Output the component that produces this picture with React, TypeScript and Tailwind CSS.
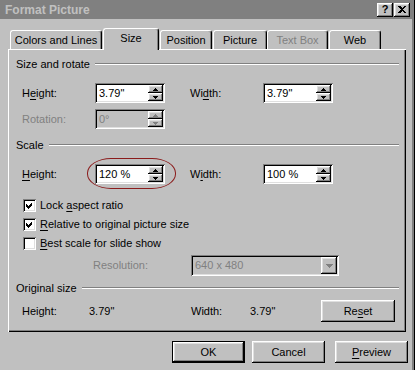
import React from 'react';

const raised = 'shadow-[inset_-1px_-1px_#000,inset_1px_1px_#fff,inset_-2px_-2px_#808080,inset_2px_2px_#dfdfdf]';
const sunken = 'shadow-[inset_1px_1px_#808080,inset_-1px_-1px_#fff,inset_2px_2px_#000,inset_-2px_-2px_#dfdfdf]';

const U = ({ children }: { children: React.ReactNode }) => <span className="underline underline-offset-[2px]">{children}</span>;

const Arrow = ({ up, disabled }: { up?: boolean; disabled?: boolean }) => (
  <svg width="5" height="3" viewBox="0 0 5 3" shapeRendering="crispEdges">
    <polygon points={up ? '0,3 5,3 2.5,0' : '0,0 5,0 2.5,3'} fill={disabled ? '#808080' : '#000'} />
  </svg>
);

const Spin = ({ value, disabled }: { value: string; disabled?: boolean }) => (
  <div className={`w-[70px] h-[20px] p-[2px] flex ${sunken} ${disabled ? 'bg-[#c0c0c0]' : 'bg-white'}`}>
    <div className={`flex-1 flex items-center pl-[2px] ${disabled ? 'text-[#808080]' : 'text-black'}`}>{value}</div>
    <div className="w-[15px] flex flex-col">
      <div className={`flex-1 flex items-center justify-center bg-[#c0c0c0] ${raised}`}><Arrow up disabled={disabled} /></div>
      <div className={`flex-1 flex items-center justify-center bg-[#c0c0c0] ${raised}`}><Arrow disabled={disabled} /></div>
    </div>
  </div>
);

const Header = ({ title }: { title: string }) => (
  <div className="h-[14px] flex items-center gap-[5px] pl-[8px] pr-[7px]">
    <span>{title}</span>
    <div className="flex-1 border-t border-b border-t-[#808080] border-b-white" />
  </div>
);

const Check = ({ checked, children }: { checked?: boolean; children: React.ReactNode }) => (
  <div className="h-[14px] flex items-center pl-[15px] gap-[4px]">
    <div className={`w-[13px] h-[13px] bg-white p-[2px] ${sunken}`}>
      {checked && (
        <svg width="9" height="9" viewBox="0 0 9 9" shapeRendering="crispEdges">
          <polygon points="1,3 3,5 7,1 7,4 3,8 1,6" fill="#000" />
        </svg>
      )}
    </div>
    <span>{children}</span>
  </div>
);

const Tab = ({ label, w, active, disabled, ml }: { label: string; w: string; active?: boolean; disabled?: boolean; ml: string }) => (
  <div
    className={`${w} ${ml} flex items-center justify-center bg-[#c0c0c0] border-l border-t border-white border-r border-r-black rounded-t-[3px] shadow-[inset_-1px_0_#808080] ${
      active ? 'h-[22px] -mb-[1px] z-10 pb-[3px]' : 'h-[19px]'
    } ${disabled ? 'text-[#808080]' : 'text-black'}`}
  >
    {label}
  </div>
);

const Button = ({ children, w, def }: { children: React.ReactNode; w: string; def?: boolean }) => (
  <div className={`${w} h-[22px] flex items-center justify-center bg-[#c0c0c0] ${def ? 'border border-black' : ''}`}>
    <div className={`w-full h-full flex items-center justify-center ${raised}`}>{children}</div>
  </div>
);

export default function App() {
  return (
    <div className="w-[415px] h-[370px] bg-[#c0c0c0] flex font-['Liberation_Sans',Arial,sans-serif] text-[11px] text-black overflow-hidden">
      <div className="w-[412px] h-full flex flex-col">
        {/* title bar */}
        <div className="h-[19px] bg-[#808080] flex items-center pl-[5px] pr-[2px]">
          <span className="flex-1 font-bold text-[12px] text-[#c0c0c0]">Format Picture</span>
          <div className={`w-[16px] h-[14px] bg-[#c0c0c0] flex items-center justify-center font-bold text-[11px] ${raised}`}>?</div>
          <div className={`w-[16px] h-[14px] ml-[1px] bg-[#c0c0c0] flex items-center justify-center ${raised}`}>
            <svg width="8" height="7" viewBox="0 0 8 7" shapeRendering="crispEdges">
              <path d="M0 0h2l2 2 2-2h2L5 3.5 8 7H6L4 5 2 7H0l3-3.5z" fill="#000" />
            </svg>
          </div>
        </div>

        {/* tabs */}
        <div className="h-[21px] mt-[9px] flex items-end pl-[10px] relative">
          <Tab label="Colors and Lines" w="w-[92px]" ml="ml-0" />
          <Tab label="Size" w="w-[56px]" ml="ml-[1px]" active />
          <Tab label="Position" w="w-[52px]" ml="ml-[1px]" />
          <Tab label="Picture" w="w-[54px]" ml="ml-[1px]" />
          <Tab label="Text Box" w="w-[61px]" ml="ml-0" disabled />
          <Tab label="Web" w="w-[52px]" ml="ml-[1px]" />
        </div>

        {/* panel */}
        <div className="ml-[8px] w-[398px] h-[283px] relative shadow-[inset_1px_1px_#fff,inset_-1px_-1px_#000,inset_-2px_-2px_#808080] flex flex-col">
          <div className="pt-[8px]">
            <Header title="Size and rotate" />
          </div>

          <div className="mt-[12px] h-[20px] flex items-center">
            <span className="w-[87px] pl-[14px]">H<U>e</U>ight:</span>
            <Spin value={'3.79"'} />
            <span className="w-[98px] pl-[25px]">Wi<U>d</U>th:</span>
            <Spin value={'3.79"'} />
          </div>

          <div className="mt-[6px] h-[20px] flex items-center">
            <span className="w-[87px] pl-[14px] text-[#808080]">Rotation:</span>
            <Spin value="0°" disabled />
          </div>

          <div className="mt-[9px]">
            <Header title="Scale" />
          </div>

          <div className="mt-[12px] h-[20px] flex items-center">
            <span className="w-[87px] pl-[14px]"><U>H</U>eight:</span>
            <Spin value="120 %" />
            <span className="w-[98px] pl-[25px]">W<U>i</U>dth:</span>
            <Spin value="100 %" />
          </div>

          <div className="mt-[14px]">
            <Check checked>Lock <U>a</U>spect ratio</Check>
          </div>
          <div className="mt-[5px]">
            <Check checked><U>R</U>elative to original picture size</Check>
          </div>
          <div className="mt-[5px]">
            <Check><U>B</U>est scale for slide show</Check>
          </div>

          <div className="mt-[5px] h-[21px] flex items-center">
            <span className="w-[140px] pr-[0px] text-right text-[#808080]">Resolution:</span>
            <div className={`ml-[43px] w-[148px] h-[21px] p-[2px] flex bg-[#c0c0c0] ${sunken}`}>
              <div className="flex-1 flex items-center pl-[2px] text-[#808080]">640 x 480</div>
              <div className={`w-[16px] flex items-center justify-center ${raised}`}>
                <svg width="7" height="4" viewBox="0 0 7 4" shapeRendering="crispEdges">
                  <polygon points="0,0 7,0 3.5,4" fill="#808080" />
                </svg>
              </div>
            </div>
          </div>

          <div className="mt-[5px]">
            <Header title="Original size" />
          </div>

          <div className="mt-[5px] h-[22px] flex items-center">
            <span className="w-[81px] pl-[14px]">Height:</span>
            <span className="w-[102px]">3.79"</span>
            <span className="w-[59px]">Width:</span>
            <span className="w-[71px]">3.79"</span>
            <Button w="w-[74px]">Re<U>s</U>et</Button>
          </div>

          {/* hand-drawn highlight around scale height */}
          <div className="absolute left-[79px] top-[109px] w-[89px] h-[31px] border-[1.5px] border-[#8b1c1c] rounded-[24px/15px]" />
        </div>

        {/* dialog buttons */}
        <div className="mt-[9px] flex pl-[172px]">
          <Button w="w-[73px]" def>OK</Button>
          <div className="ml-[7px]"><Button w="w-[73px]">Cancel</Button></div>
          <div className="ml-[10px]"><Button w="w-[73px]"><U>P</U>review</Button></div>
        </div>
      </div>
      <div className="w-[3px] h-full bg-[#808080] border-r border-r-black" />
    </div>
  );
}
